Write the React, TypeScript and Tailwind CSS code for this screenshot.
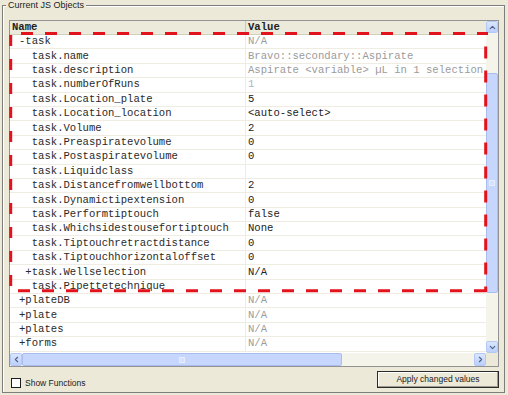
import React from "react"
import { ChevronUp, ChevronDown, ChevronLeft, ChevronRight } from "lucide-react"

type Fila = { nombre: string; valor: string; gris?: boolean; claro?: boolean }

const filas: Fila[] = [
  { nombre: "-task", valor: "N/A", gris: true },
  { nombre: "  task.name", valor: "Bravo::secondary::Aspirate", gris: true },
  { nombre: "  task.description", valor: "Aspirate <variable> µL in 1 selection", gris: true },
  { nombre: "  task.numberOfRuns", valor: "1", claro: true },
  { nombre: "  task.Location_plate", valor: "5" },
  { nombre: "  task.Location_location", valor: "<auto-select>" },
  { nombre: "  task.Volume", valor: "2" },
  { nombre: "  task.Preaspiratevolume", valor: "0" },
  { nombre: "  task.Postaspiratevolume", valor: "0" },
  { nombre: "  task.Liquidclass", valor: "" },
  { nombre: "  task.Distancefromwellbottom", valor: "2" },
  { nombre: "  task.Dynamictipextension", valor: "0" },
  { nombre: "  task.Performtiptouch", valor: "false" },
  { nombre: "  task.Whichsidestousefortiptouch", valor: "None" },
  { nombre: "  task.Tiptouchretractdistance", valor: "0" },
  { nombre: "  task.Tiptouchhorizontaloffset", valor: "0" },
  { nombre: " +task.Wellselection", valor: "N/A" },
  { nombre: "  task.Pipettetechnique", valor: "" },
  { nombre: "+plateDB", valor: "N/A", gris: true },
  { nombre: "+plate", valor: "N/A", gris: true },
  { nombre: "+plates", valor: "N/A", gris: true },
  { nombre: "+forms", valor: "N/A", gris: true },
]

// boton azul estilo XP de la barra de desplazamiento
function BotonScroll({ children, className = "" }: { children: React.ReactNode; className?: string }) {
  return (
    <div className={`flex items-center justify-center rounded-[2px] border border-[#b4c8f6] bg-gradient-to-b from-[#dbe6fe] to-[#bccffb] text-[#4d6185] ${className}`}>
      {children}
    </div>
  )
}

export default function App() {
  return (
    <div className="relative w-[508px] h-[395px] overflow-hidden bg-[#ece9d8] font-['Liberation_Sans',Arial,sans-serif]">
      {/* GRUPO */}
      <div className="relative ml-[2px] mt-[5px] w-[503px] h-[388px] border border-[#7d7d7d] shadow-[inset_1px_1px_0_#fff]">
        <span className="absolute -top-[7px] left-[3px] bg-[#ece9d8] px-[2px] text-[9px] leading-[12px] text-[#222]">
          Current JS Objects
        </span>

        <div className="pl-[6px] pt-[14px]">
          {/* LISTA */}
          <div className="w-[490px] h-[347px] border border-[#939393] bg-white flex flex-col">
            <div className="flex h-[332px]">
              {/* area principal */}
              <div className="w-[476px] flex flex-col font-['Liberation_Mono','Courier_New',monospace] text-[10.6px]">
                <div className="flex h-[14px] bg-[#ebeadb] border-b border-[#d3d0bf] font-bold text-[#222]">
                  <div className="w-[236px] pl-[2px] pt-[1px] flex items-center border-r border-[#c9c6b4]">Name</div>
                  <div className="flex-1 pl-[2px] pt-[1px] flex items-center">Value</div>
                </div>
                {filas.map((f, idx) => (
                  <div key={idx} className="flex h-[14.4px] border-b border-[#efede1]">
                    <div className="w-[236px] pl-[9px] pt-[1px] flex items-center whitespace-pre text-[#2a2a2a] border-r border-[#efede1]">
                      {f.nombre}
                    </div>
                    <div className={`flex-1 pl-[2px] pt-[1px] flex items-center whitespace-pre ${f.gris ? "text-[#9b9b9b]" : f.claro ? "text-[#a9b6c4]" : "text-[#222]"}`}>
                      {f.valor}
                    </div>
                  </div>
                ))}
              </div>

              {/* scroll vertical */}
              <div className="w-[12px] flex flex-col bg-[#f5f4ea]">
                <BotonScroll className="h-[12px]"><ChevronUp size={9} strokeWidth={3} /></BotonScroll>
                <div className="flex-1 pt-[40px] pb-[48px] flex">
                  <div className="flex-1 rounded-[2px] border border-[#a9bdee] bg-[#c6d6fc] flex items-center justify-center">
                    <div className="w-[6px] h-[6px] border border-[#e6edff] bg-[#d5e1fd]"></div>
                  </div>
                </div>
                <BotonScroll className="h-[12px]"><ChevronDown size={9} strokeWidth={3} /></BotonScroll>
              </div>
            </div>

            {/* scroll horizontal */}
            <div className="flex h-[13px]">
              <div className="w-[476px] flex bg-[#f5f4ea]">
                <BotonScroll className="w-[12px]"><ChevronLeft size={9} strokeWidth={3} /></BotonScroll>
                <div className="w-[320px] rounded-[2px] border border-[#a9bdee] bg-[#c6d6fc] flex items-center justify-center">
                  <div className="w-[6px] h-[6px] border border-[#e6edff] bg-[#d5e1fd]"></div>
                </div>
                <div className="flex-1"></div>
                <BotonScroll className="w-[12px]"><ChevronRight size={9} strokeWidth={3} /></BotonScroll>
              </div>
              <div className="flex-1 bg-[#ece9d8]"></div>
            </div>
          </div>

          {/* PIE */}
          <div className="w-[490px] flex justify-between items-start">
            <label className="mt-[10px] ml-[2px] flex items-center gap-[4px] text-[8.5px] text-[#222]">
              <span className="w-[10px] h-[10px] border-[1.5px] border-[#1c1c1c] bg-white"></span>
              Show Functions
            </label>
            <button className="mt-[4px] w-[122px] h-[17px] border border-[#2b2b2b] bg-[#ece9d8] shadow-[inset_-1px_-1px_0_#9d9b8d,inset_1px_1px_0_#fff] text-[8.5px] text-[#222]">
              Apply changed values
            </button>
          </div>
        </div>
      </div>

      {/* MARCO ROJO DISCONTINUO */}
      <svg className="absolute left-0 top-0 pointer-events-none" width="508" height="395">
        <g stroke="#e3131d" strokeWidth="3" fill="none">
          <line x1="9" y1="33.5" x2="488" y2="33.5" strokeDasharray="12 12" strokeDashoffset="12" />
          <line x1="9" y1="290.8" x2="488" y2="290.8" strokeDasharray="12 12" strokeDashoffset="15" />
          <line x1="10.7" y1="35" x2="10.7" y2="288" strokeDasharray="11 13" />
          <line x1="485.7" y1="46.5" x2="485.7" y2="292" strokeDasharray="12 12" />
        </g>
      </svg>
    </div>
  )
}
